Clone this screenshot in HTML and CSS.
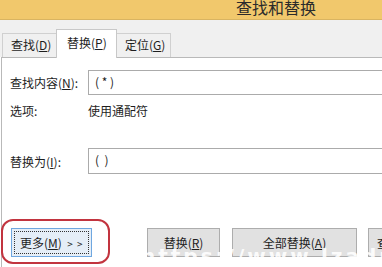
FILE: index.html
```html
<!DOCTYPE html>
<html lang="zh-CN">
<head>
    <meta charset="UTF-8">
    <title>查找和替换</title>
    <link rel="stylesheet" href="styles.css">
</head>
<body>
    <div class="window">
        <div class="titlebar"><span class="title">查找和替换</span></div>

        <div class="tabs">
            <div class="tab">查找(<u>D</u>)</div>
            <div class="tab active">替换(<u>P</u>)</div>
            <div class="tab">定位(<u>G</u>)</div>
        </div>

        <div class="panel">
            <div class="row">
                <span class="label">查找内容(<u>N</u>):</span>
                <div class="field">( * )</div>
            </div>
            <div class="row options">
                <span class="label">选项:</span>
                <span>使用通配符</span>
            </div>
            <div class="row replace">
                <span class="label">替换为(<u>I</u>):</span>
                <div class="field">(&nbsp;&nbsp;)</div>
            </div>

            <div class="buttons">
                <button class="btn more"><span class="focus">更多(<u>M</u>)&nbsp;&nbsp;<span class="arrows">&gt; &gt;</span></span></button>
                <button class="btn replace-one">替换(<u>R</u>)</button>
                <button class="btn replace-all">全部替换(<u>A</u>)</button>
                <button class="btn find-next">查</button>
            </div>
        </div>

        <!-- пометка поверх кнопки и водяной знак -->
        <div class="highlight"></div>
        <div class="watermark">https://www.lzadmin.c</div>
    </div>
</body>
</html>
```

FILE: styles.css
```css
* {
    box-sizing: border-box;
    margin: 0;
    padding: 0;
}

body {
    width: 382px;
    height: 267px;
    overflow: hidden;
    background: #ffffff;
    font-family: "Noto Sans CJK SC", "Microsoft YaHei", sans-serif;
    font-size: 12px;
    color: #1e1e1e;
}

.window {
    position: relative;
    width: 382px;
    height: 267px;
    overflow: hidden;
}

.titlebar {
    height: 20px;
    background-color: #f1c86c;
    border-bottom: 1px solid #d9b461;
    padding-left: 236px;
    overflow: hidden;
}

.title {
    display: inline-block;
    font-size: 16px;
    line-height: 16px;
    margin-top: -5px;
    color: #2b2b2b;
}

.tabs {
    height: 37px;
    background-color: #f0f0f0;
    padding-left: 2px;
    display: flex;
    align-items: flex-end;
}

.tab {
    width: 55px;
    height: 24px;
    line-height: 21px;
    padding-left: 8px;
    border: 1px solid #d0d0d0;
    border-bottom: none;
    background-color: #f0f0f0;
}

.tab.active {
    width: 61px;
    height: 29px;
    padding-left: 10px;
    line-height: 25px;
    background-color: #ffffff;
    border-color: #c8c8c8;
    margin-bottom: -1px;
    position: relative;
    z-index: 1;
}

.tab + .tab {
    margin-left: -1px;
}

.panel {
    height: 210px;
    border-top: 1px solid #b9b9b9;
    border-left: 1px solid #b9b9b9;
    margin-left: 1px;
    margin-right: -20px;
    padding: 12px 0 0 8px;
}

.row {
    display: flex;
    align-items: center;
}

.label {
    width: 78px;
    flex-shrink: 0;
}

.field {
    flex: 1;
    height: 25px;
    border: 1px solid #ababab;
    padding-left: 6px;
    line-height: 22px;
}

.options {
    margin-top: 7px;
    height: 16px;
}

.replace {
    margin-top: 30px;
}

.replace .field {
    height: 26px;
}

.buttons {
    display: flex;
    margin-top: 54px;
    margin-left: 1px;
}

.btn {
    height: 29px;
    flex-shrink: 0;
    font: inherit;
    color: #1e1e1e;
    background-color: #e1e1e1;
    border: 1px solid #adadad;
}

.btn.more {
    width: 81px;
    padding: 2px;
    border-color: #6fa7e0;
    background-color: #e5eef7;
}

.focus {
    display: block;
    height: 100%;
    border: 1px dotted #333;
    line-height: 21px;
    text-align: left;
    padding-left: 5px;
}

.arrows {
    font-size: 10px;
    letter-spacing: 1px;
}

.replace-one {
    width: 73px;
    margin-left: 55px;
}

.replace-all {
    width: 125px;
    margin-left: 12px;
}

.find-next {
    width: 40px;
    margin-left: 11px;
    text-align: left;
    padding-left: 8px;
}

.highlight {
    position: absolute;
    left: 1px;
    top: 219px;
    width: 109px;
    height: 45px;
    border: 2px solid #c2343f;
    border-radius: 12px;
}

.watermark {
    position: absolute;
    left: 141px;
    top: 244px;
    font-family: "DejaVu Sans", sans-serif;
    font-weight: bold;
    font-size: 20px;
    letter-spacing: 3px;
    color: rgba(255, 255, 255, 0.9);
    white-space: nowrap;
}
```
